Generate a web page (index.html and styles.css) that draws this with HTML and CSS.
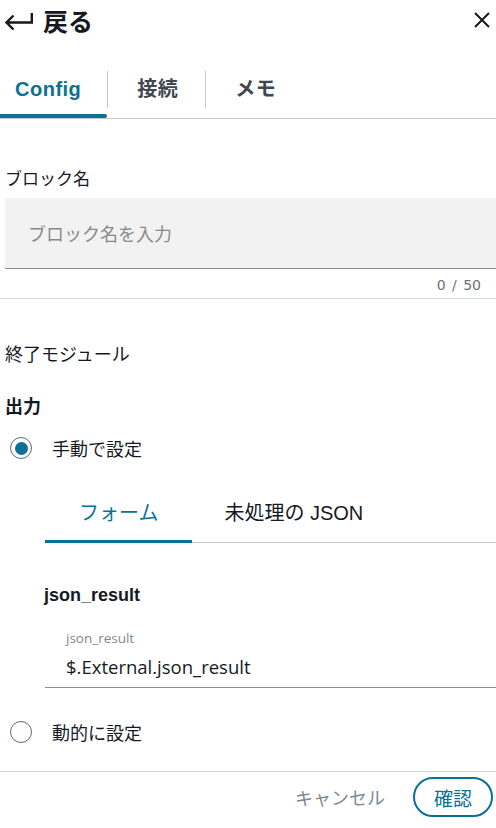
FILE: index.html
```html
<!DOCTYPE html>
<html lang="ja">
<head>
<meta charset="utf-8">
<link rel="stylesheet" href="styles.css">
</head>
<body>
<div class="panel">
  <header class="topbar">
    <div class="back">
      <svg class="back-icon" width="28" height="18" viewBox="0 0 28 18"><path d="M8.5 3.5 L1.5 10.5 L8.5 17.5 M1.5 10.5 H26.8 V1" fill="none" stroke="#16191f" stroke-width="2.4" stroke-linejoin="miter"/></svg>
      <span>戻る</span>
    </div>
    <svg class="close" width="16" height="16" viewBox="0 0 16 16"><path d="M1 1 L15 15 M15 1 L1 15" stroke="#16191f" stroke-width="2"/></svg>
  </header>

  <nav class="tabs">
    <div class="tab tab-first active">Config</div>
    <span class="tab-sep"></span>
    <div class="tab">接続</div>
    <span class="tab-sep"></span>
    <div class="tab">メモ</div>
  </nav>

  <section class="name-section">
    <div class="field-label">ブロック名</div>
    <div class="input">ブロック名を入力</div>
    <div class="counter">0 / 50</div>
  </section>
  <hr class="divider">

  <section class="module">
    <div class="module-title">終了モジュール</div>
    <div class="out-title">出力</div>
    <div class="radio-row"><span class="radio checked"></span><span>手動で設定</span></div>

    <div class="subtabs">
      <div class="subtab active">フォーム</div>
      <div class="subtab">未処理の JSON</div>
    </div>

    <div class="json-block">
      <div class="json-title">json_result</div>
      <div class="json-field">
        <div class="json-small">json_result</div>
        <div class="json-value">$.External.json_result</div>
      </div>
    </div>

    <div class="radio-row radio-row-2"><span class="radio"></span><span>動的に設定</span></div>
  </section>

  <hr class="divider footer-divider">
  <footer class="footer">
    <span class="cancel">キャンセル</span>
    <span class="confirm">確認</span>
  </footer>
</div>
</body>
</html>
```

FILE: styles.css
```css
* { box-sizing: border-box; }
html, body { margin: 0; padding: 0; background: #fff; }
body {
  font-family: "Liberation Sans", "Noto Sans CJK JP", sans-serif;
  color: #16191f;
  width: 496px;
  overflow: hidden;
}
.panel { width: 496px; }

.topbar {
  height: 40px;
  display: flex;
  align-items: center;
  justify-content: space-between;
  padding: 0 6px 0 5px;
}
.back {
  display: flex;
  align-items: center;
  gap: 10px;
  font-family: "Noto Sans CJK JP", sans-serif;
  font-size: 25px;
  font-weight: 700;
  line-height: 40px;
}
.back-icon { display: block; margin-top: 2px; }
.close { display: block; }

.tabs {
  margin-top: 31px;
  display: flex;
  align-items: flex-start;
  border-bottom: 1px solid #c6c6cd;
  height: 48px;
}
.tab {
  position: relative;
  height: 47px;
  line-height: 37px;
  font-size: 20px;
  font-weight: 700;
  color: #414750;
  padding: 0 27px 0 29px;
  letter-spacing: 0.5px;
}
.tab-first { padding: 0 26px 0 15px; }
.tab.active { color: #0b7196; }
.tab.active::after {
  content: "";
  position: absolute;
  left: 0;
  right: 0;
  bottom: 0;
  height: 4px;
  background: #0b7196;
  border-radius: 0 3px 3px 0;
}
.tab-sep {
  width: 1px;
  height: 37px;
  background: #c6c6cd;
}

.name-section { padding-left: 5px; margin-top: 47px; }
.field-label {
  font-family: "Noto Sans CJK JP", sans-serif;
  font-size: 17px;
  line-height: 24px;
}
.input {
  margin-top: 8px;
  height: 71px;
  background: #f2f2f2;
  border-bottom: 1px solid #8d8d8d;
  padding-left: 23px;
  line-height: 70px;
  font-family: "Noto Sans CJK JP", sans-serif;
  font-size: 18px;
  color: #8a8a8a;
}
.counter {
  margin-top: 6px;
  text-align: right;
  padding-right: 15px;
  font-family: "DejaVu Sans", sans-serif;
  font-size: 14px;
  word-spacing: 2px;
  line-height: 20px;
  color: #687078;
}
.divider {
  margin: 3px 0 0;
  border: 0;
  height: 1px;
  background: #d5dbdb;
}

.module { padding-left: 5px; }
.module-title {
  margin-top: 42px;
  font-family: "Noto Sans CJK JP", sans-serif;
  font-size: 18px;
  line-height: 24px;
}
.out-title {
  margin-top: 28px;
  font-family: "Noto Sans CJK JP", sans-serif;
  font-size: 18px;
  font-weight: 700;
  line-height: 24px;
}
.radio-row {
  margin-top: 19px;
  display: flex;
  align-items: center;
  gap: 20px;
  height: 24px;
  padding-left: 5px;
  font-family: "Noto Sans CJK JP", sans-serif;
  font-size: 18px;
}
.radio {
  width: 22px;
  height: 22px;
  border: 1.5px solid #5f6b7a;
  border-radius: 50%;
  display: flex;
  align-items: center;
  justify-content: center;
  flex: none;
}
.radio.checked::before {
  content: "";
  width: 13px;
  height: 13px;
  border-radius: 50%;
  background: #0b7196;
}

.subtabs {
  margin-top: 30px;
  margin-left: 40px;
  display: flex;
  border-bottom: 1px solid #c6c6cd;
  height: 53px;
}
.subtab {
  position: relative;
  padding: 0 34px;
  line-height: 46px;
  font-family: "Liberation Sans", "Noto Sans CJK JP", sans-serif;
  font-size: 20px;
  color: #16191f;
}
.subtab + .subtab { padding-left: 32px; }
.subtab.active { color: #0b7196; }
.subtab.active::after {
  content: "";
  position: absolute;
  left: 0;
  right: 0;
  bottom: -1px;
  height: 3px;
  background: #0b7196;
}

.json-block { margin-left: 39px; }
.json-title {
  margin-top: 40px;
  font-family: "Liberation Sans", sans-serif;
  font-weight: 700;
  font-size: 18px;
  line-height: 24px;
}
.json-field {
  margin-top: 23px;
  margin-left: 1px;
  padding-left: 21px;
  padding-bottom: 7px;
  border-bottom: 1px solid #8d8d8d;
}
.json-small {
  font-family: "Open Sans", sans-serif;
  font-size: 13.5px;
  line-height: 16px;
  color: #7d8998;
}
.json-value {
  margin-top: 8px;
  font-family: "Open Sans", sans-serif;
  font-size: 18.5px;
  line-height: 26px;
}
.radio-row-2 { margin-top: 32px; }

.footer-divider { margin-top: 27px; }
.footer {
  margin-top: 5px;
  display: flex;
  justify-content: flex-end;
  align-items: center;
  gap: 28px;
  padding-right: 3px;
}
.cancel {
  font-family: "Noto Sans CJK JP", sans-serif;
  font-size: 18px;
  color: #7d8998;
}
.confirm {
  width: 80px;
  height: 40px;
  border: 2px solid #0b7196;
  border-radius: 20px;
  display: flex;
  align-items: center;
  justify-content: center;
  font-family: "Noto Sans CJK JP", sans-serif;
  font-size: 19px;
  color: #0b7196;
}
```
